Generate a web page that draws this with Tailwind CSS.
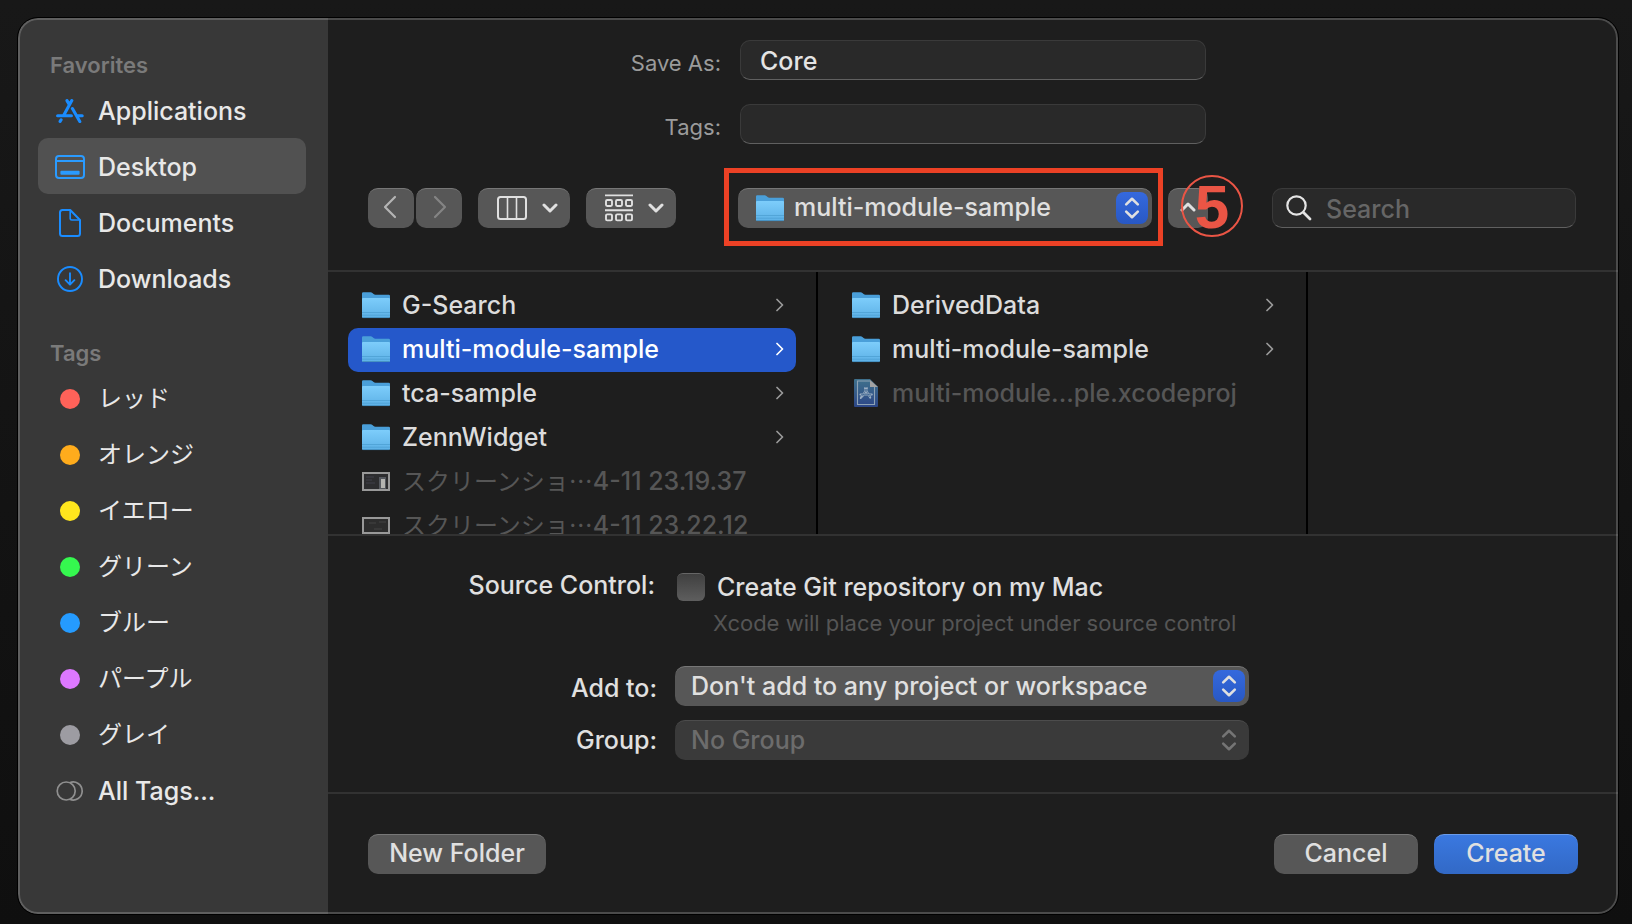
<!DOCTYPE html>
<html lang="en">
<head>
    <meta charset="UTF-8">
    <meta name="viewport" content="width=device-width, initial-scale=1.0">
    <title>Save As</title>
    <script src="https://cdn.jsdelivr.net/npm/@tailwindcss/browser@4"></script>
</head>
<body class="min-h-screen flex pl-[18px] pr-[14px] pt-[18px] pb-[10px] bg-linear-to-b from-[#181818] to-[#0f0f0f] font-['Inter','Noto_Sans_CJK_JP',sans-serif] font-medium text-[25px] leading-8 text-[#e0e0e0]">

    <!-- Shared icons -->
    <svg class="absolute size-0" aria-hidden="true">
        <defs>
            <linearGradient id="folder-front" x1="0" y1="0" x2="0" y2="1">
                <stop offset="0" stop-color="#7dcdfb"/>
                <stop offset="1" stop-color="#5db1e6"/>
            </linearGradient>
            <linearGradient id="project-fill" x1="0" y1="0" x2="0" y2="1">
                <stop offset="0" stop-color="#3f718c"/>
                <stop offset="1" stop-color="#2c4687"/>
            </linearGradient>
        </defs>
        <symbol id="icon-folder" viewBox="0 0 28 27">
            <path d="M0 1.5Q0 .3 1.2 .3H8.6Q9.6 .3 10.4 1L11.6 2.1Q12.3 2.8 13.4 2.8H26.8Q28 2.8 28 4V10H0z" fill="#4a9fd9"/>
            <path d="M0 6.9Q0 6 1 6H27Q28 6 28 6.9V24.8Q28 26 26.8 26H1.2Q0 26 0 24.8z" fill="url(#folder-front)"/>
            <path d="M0 20.5H28M0 23.2H28" stroke="#4c9fd3" stroke-width=".8"/>
            <path d="M.6 25.6H27.4" stroke="#3f86b5" stroke-width=".8"/>
        </symbol>
        <symbol id="icon-more" viewBox="0 0 8 14">
            <path d="M1 1.5L6.5 7L1 12.5" fill="none" stroke="currentColor" stroke-width="1.7" stroke-linecap="round" stroke-linejoin="round"/>
        </symbol>
        <symbol id="icon-down" viewBox="0 0 16 10">
            <path d="M2 2L8 8L14 2" fill="none" stroke="currentColor" stroke-width="3" stroke-linecap="round" stroke-linejoin="round"/>
        </symbol>
        <symbol id="icon-updown" viewBox="0 0 16 24">
            <path d="M2.2 8.4L8 2.8L13.8 8.4M2.2 15.6L8 21.2L13.8 15.6" fill="none" stroke="currentColor" stroke-width="2.6" stroke-linecap="round" stroke-linejoin="round"/>
        </symbol>
    </svg>

    <div class="relative flex-1 flex rounded-[20px] overflow-hidden bg-[#1e1e1e] outline outline-black">

        <!-- Sidebar -->
        <nav class="w-[310px] shrink-0 bg-[#383838] pl-5 pr-[22px] pt-7 text-[#e8e8e8]">
            <h2 class="px-3 pt-0.5 h-9 flex items-center text-[22px] font-semibold text-[#7a7a7a]">Favorites</h2>
            <ul>
                <li><a href="#" class="flex items-center gap-3 h-14 pl-4 pr-3 pt-0.5 rounded-[10px]">
                    <span class="w-8 flex justify-center text-[#1a8cff]">
                        <svg class="w-7 h-6" viewBox="0 0 28 24" fill="none" stroke="currentColor" stroke-width="3.1" stroke-linecap="round">
                            <path d="M15.8 1.6L7.6 16.4M5.1 20.8L4.1 22.4M11 1.6L13.2 5.4M16.4 9.6L23.8 22.6M1.6 16.7H15.4M21.4 16.7H26.2"/>
                        </svg>
                    </span>
                    Applications</a></li>
                <li><a href="#" aria-current="true" class="flex items-center gap-3 h-14 pl-4 pr-3 pt-0.5 rounded-[10px] bg-[#515151]">
                    <span class="w-8 flex justify-center text-[#2a9bff]">
                        <svg class="w-[30px] h-6" viewBox="0 0 30 24" fill="none" stroke="currentColor" stroke-width="2">
                            <rect x="1" y="1" width="28" height="22" rx="3"/>
                            <path d="M1 6H29" stroke-width="1.8"/>
                            <rect x="5.4" y="15.8" width="19.2" height="4" rx="1" fill="currentColor" stroke="none"/>
                        </svg>
                    </span>
                    Desktop</a></li>
                <li><a href="#" class="flex items-center gap-3 h-14 pl-4 pr-3 pt-0.5 rounded-[10px]">
                    <span class="w-8 flex justify-center text-[#1a8cff]">
                        <svg class="w-[22px] h-7" viewBox="0 0 22 28" fill="none" stroke="currentColor" stroke-width="2" stroke-linejoin="round">
                            <path d="M3.5 1H11.2L21 11V24.5Q21 27 18.5 27H3.5Q1 27 1 24.5V3.5Q1 1 3.5 1z"/>
                            <path d="M11.2 1V9.5Q11.2 11 12.7 11H21" stroke-width="1.7"/>
                        </svg>
                    </span>
                    Documents</a></li>
                <li><a href="#" class="flex items-center gap-3 h-14 pl-4 pr-3 pt-0.5 rounded-[10px]">
                    <span class="w-8 flex justify-center text-[#1a8cff]">
                        <svg class="w-[26px] h-[26px]" viewBox="0 0 26 26" fill="none" stroke="currentColor" stroke-width="1.9" stroke-linecap="round" stroke-linejoin="round">
                            <circle cx="13" cy="13" r="12"/>
                            <path d="M13 7.3V18.4M8.6 14.2L13 18.6L17.4 14.2"/>
                        </svg>
                    </span>
                    Downloads</a></li>
            </ul>

            <h2 class="mt-7 px-3 pt-0.5 h-9 flex items-center text-[22px] font-semibold text-[#7a7a7a]">Tags</h2>
            <ul lang="ja" class="text-[24px] font-normal">
                <li><a href="#" class="flex items-center gap-3 h-14 pl-4 pr-3 pt-0.5"><span class="w-8 flex justify-center"><span class="size-5 rounded-full bg-[#ff6259]"></span></span>レッド</a></li>
                <li><a href="#" class="flex items-center gap-3 h-14 pl-4 pr-3 pt-0.5"><span class="w-8 flex justify-center"><span class="size-5 rounded-full bg-[#ffac1c]"></span></span>オレンジ</a></li>
                <li><a href="#" class="flex items-center gap-3 h-14 pl-4 pr-3 pt-0.5"><span class="w-8 flex justify-center"><span class="size-5 rounded-full bg-[#ffe61d]"></span></span>イエロー</a></li>
                <li><a href="#" class="flex items-center gap-3 h-14 pl-4 pr-3 pt-0.5"><span class="w-8 flex justify-center"><span class="size-5 rounded-full bg-[#35f84f]"></span></span>グリーン</a></li>
                <li><a href="#" class="flex items-center gap-3 h-14 pl-4 pr-3 pt-0.5"><span class="w-8 flex justify-center"><span class="size-5 rounded-full bg-[#259bff]"></span></span>ブルー</a></li>
                <li><a href="#" class="flex items-center gap-3 h-14 pl-4 pr-3 pt-0.5"><span class="w-8 flex justify-center"><span class="size-5 rounded-full bg-[#dd78ff]"></span></span>パープル</a></li>
                <li><a href="#" class="flex items-center gap-3 h-14 pl-4 pr-3 pt-0.5"><span class="w-8 flex justify-center"><span class="size-5 rounded-full bg-[#9d9ca2]"></span></span>グレイ</a></li>
                <li lang="en"><a href="#" class="flex items-center gap-3 h-14 pl-4 pr-3 pt-0.5 text-[25px] font-medium">
                    <span class="w-8 flex justify-center text-[#8f8f8f]">
                        <svg class="w-7 h-5" viewBox="0 0 28 20" fill="none" stroke="currentColor" stroke-width="1.7">
                            <circle cx="10.2" cy="10" r="9"/>
                            <path d="M13.7 1.7A9 9 0 1 1 13.7 18.3"/>
                        </svg>
                    </span>
                    All Tags...</a></li>
            </ul>
        </nav>

        <main class="flex-1 min-w-0 flex flex-col">

            <!-- File name, tags and toolbar -->
            <header class="h-[254px] border-b-2 border-[#323232] pt-[22px]">
                <div class="grid grid-cols-[1fr_466px_1fr] gap-x-[19px] gap-y-6 items-center">
                    <label for="save-as" class="text-right text-[22px] font-normal text-[#9b9b9b] pt-1.5">Save As:</label>
                    <input id="save-as" type="text" value="Core" class="h-10 px-[19px] pt-0.5 rounded-[10px] bg-[#292929] border border-[#3a3a3a] border-b-[#606060] text-[#e4e4e4] outline-none">
                    <span></span>
                    <label for="file-tags" class="text-right text-[22px] font-normal text-[#9b9b9b] pt-1.5">Tags:</label>
                    <input id="file-tags" type="text" class="h-10 px-[19px] pt-0.5 rounded-[10px] bg-[#292929] border border-[#3a3a3a] border-b-[#606060] text-[#e4e4e4] outline-none">
                </div>

                <div class="mt-11 pl-10 pr-[42px] flex items-center">
                    <div class="flex gap-0.5">
                        <button aria-label="Back" class="w-[46px] h-10 pb-1 flex items-center justify-center rounded-[10px] bg-[#575757] border-t border-[#777777] text-[#b4b4b4]">
                            <svg class="w-4 h-6" viewBox="0 0 16 24" fill="none" stroke="currentColor" stroke-width="2.2" stroke-linecap="round" stroke-linejoin="round"><path d="M12 2L2 12L12 22"/></svg>
                        </button>
                        <button aria-label="Forward" class="w-[46px] h-10 pb-1 flex items-center justify-center rounded-[10px] bg-[#575757] border-t border-[#777777] text-[#848484]">
                            <svg class="w-4 h-6" viewBox="0 0 16 24" fill="none" stroke="currentColor" stroke-width="2.2" stroke-linecap="round" stroke-linejoin="round"><path d="M4 2L14 12L4 22"/></svg>
                        </button>
                    </div>
                    <button aria-label="Column view" class="ml-4 w-[92px] h-10 pl-[19px] pr-3 pb-0.5 flex items-center justify-between rounded-[10px] bg-[#575757] border-t border-[#777777]">
                        <svg class="w-[30px] h-6" viewBox="0 0 30 24" fill="none" stroke="currentColor" stroke-width="2">
                            <rect x="1" y="1" width="28" height="22" rx="2.5"/>
                            <path d="M10.5 1V23M19.5 1V23" stroke-width="1.6"/>
                        </svg>
                        <svg class="w-4 h-2.5"><use href="#icon-down"/></svg>
                    </button>
                    <button aria-label="Group items" class="ml-4 w-[90px] h-10 pl-[19px] pr-3 pb-0.5 flex items-center justify-between rounded-[10px] bg-[#575757] border-t border-[#777777]">
                        <svg class="w-7 h-7" viewBox="0 0 28 28" fill="none" stroke="currentColor" stroke-width="1.9">
                            <path d="M0 1.4H28M0 16.2H28"/>
                            <rect x="1" y="6" width="6" height="6" rx="1.2"/>
                            <rect x="11" y="6" width="6" height="6" rx="1.2"/>
                            <rect x="21" y="6" width="6" height="6" rx="1.2"/>
                            <rect x="1" y="20.4" width="6" height="6" rx="1.2"/>
                            <rect x="11" y="20.4" width="6" height="6" rx="1.2"/>
                            <rect x="21" y="20.4" width="6" height="6" rx="1.2"/>
                        </svg>
                        <svg class="w-4 h-2.5"><use href="#icon-down"/></svg>
                    </button>

                    <div class="relative ml-[62px] flex-1">
                        <select aria-label="Location" class="block appearance-none w-full h-10 pl-14 pr-12 pb-1 rounded-[10px] bg-[#575757] border-t border-[#777777] outline-none">
                            <option>multi-module-sample</option>
                        </select>
                        <svg class="absolute left-[18px] top-[7px] w-7 h-[27px] pointer-events-none"><use href="#icon-folder"/></svg>
                        <span class="absolute right-1 top-1 size-8 flex items-center justify-center rounded-lg bg-linear-to-b from-[#3569dd] to-[#2858c4] pointer-events-none">
                            <svg class="w-4 h-6"><use href="#icon-updown"/></svg>
                        </span>
                        <!-- step marker frame -->
                        <span class="absolute -left-[14px] -right-[11px] -top-5 -bottom-[18px] border-5 border-[#ec4125] pointer-events-none"></span>
                    </div>
                    <div class="relative ml-4">
                        <button aria-label="Collapse" class="w-10 h-10 pb-1 flex items-center justify-center rounded-[10px] bg-[#575757] border-t border-[#777777]">
                            <svg class="w-4 h-2.5 rotate-180"><use href="#icon-down"/></svg>
                        </button>
                        <span class="absolute left-[13px] -top-[13px] size-[62px] pt-0.5 flex items-center justify-center rounded-full border-2 border-[#ea5545] text-[#ea5545] font-['Liberation_Sans',sans-serif] font-bold text-[62px] leading-none pointer-events-none">5</span>
                    </div>

                    <label class="ml-16 w-[304px] h-10 pl-[13px] pr-3 flex items-center gap-3.5 rounded-[10px] bg-[#292929] border border-[#3a3a3a] border-b-[#606060]">
                        <svg class="w-[26px] h-[26px] shrink-0" viewBox="0 0 26 26" fill="none" stroke="#e4e4e4" stroke-linecap="round">
                            <circle cx="10.5" cy="10.5" r="9.2" stroke-width="2.2"/>
                            <path d="M17.5 17.5L24 24" stroke-width="2.8"/>
                        </svg>
                        <input type="search" aria-label="Search" placeholder="Search" class="flex-1 min-w-0 pt-0.5 bg-transparent outline-none placeholder:text-[#666666]">
                    </label>
                </div>
            </header>

            <!-- Column browser -->
            <section class="grow h-[262px] overflow-hidden flex">
                <ul class="w-[490px] shrink-0 border-r-2 border-black px-5 pt-3 text-[#dcdcdc]">
                    <li><button class="w-full h-11 pl-[14px] pr-3 pb-0.5 flex items-center gap-3 rounded-[10px]">
                        <svg class="w-7 h-[27px]"><use href="#icon-folder"/></svg>G-Search
                        <svg class="ml-auto w-2 h-3.5 text-[#9a9a9a]"><use href="#icon-more"/></svg></button></li>
                    <li><button class="w-full h-11 pl-[14px] pr-3 pb-0.5 flex items-center gap-3 rounded-[10px] bg-[#2558ca] text-white">
                        <svg class="w-7 h-[27px]"><use href="#icon-folder"/></svg>multi-module-sample
                        <svg class="ml-auto w-2 h-3.5"><use href="#icon-more"/></svg></button></li>
                    <li><button class="w-full h-11 pl-[14px] pr-3 pb-0.5 flex items-center gap-3 rounded-[10px]">
                        <svg class="w-7 h-[27px]"><use href="#icon-folder"/></svg>tca-sample
                        <svg class="ml-auto w-2 h-3.5 text-[#9a9a9a]"><use href="#icon-more"/></svg></button></li>
                    <li><button class="w-full h-11 pl-[14px] pr-3 pb-0.5 flex items-center gap-3 rounded-[10px]">
                        <svg class="w-7 h-[27px]"><use href="#icon-folder"/></svg>ZennWidget
                        <svg class="ml-auto w-2 h-3.5 text-[#9a9a9a]"><use href="#icon-more"/></svg></button></li>
                    <li><button disabled lang="ja" class="w-full h-11 pl-[14px] pr-3 pb-0.5 flex items-center gap-3 text-[#565656]">
                        <svg class="w-7 h-[19px]" viewBox="0 0 28 19">
                            <rect width="28" height="19" fill="#999999"/>
                            <rect x="2" y="2" width="24" height="15" fill="#2d2d2f"/>
                            <path d="M4 5H12M4 8H10M4 11H13" stroke="#41414a"/>
                            <rect x="17" y="5" width="7" height="12" fill="#55585e"/>
                            <rect x="19" y="7" width="4" height="9" fill="#b4b4b0"/>
                        </svg><span><span class="text-[24px] font-normal">スクリーンショ⋯</span>4-11 23.19.37</span></button></li>
                    <li><button disabled lang="ja" class="w-full h-11 pl-[14px] pr-3 pb-0.5 flex items-center gap-3 text-[#565656]">
                        <svg class="w-7 h-[17px]" viewBox="0 0 28 17">
                            <rect width="28" height="17" fill="#999999"/>
                            <rect x="2" y="2" width="24" height="13" fill="#2d2d2d"/>
                            <path d="M7 6H14M17 5H24M12 12H20" stroke="#444444"/>
                        </svg><span><span class="text-[24px] font-normal">スクリーンショ⋯</span>4-11 23.22.12</span></button></li>
                </ul>
                <ul class="w-[490px] shrink-0 border-r-2 border-black px-5 pt-3 text-[#dcdcdc]">
                    <li><button class="w-full h-11 pl-[14px] pr-3 pb-0.5 flex items-center gap-3 rounded-[10px]">
                        <svg class="w-7 h-[27px]"><use href="#icon-folder"/></svg>DerivedData
                        <svg class="ml-auto w-2 h-3.5 text-[#9a9a9a]"><use href="#icon-more"/></svg></button></li>
                    <li><button class="w-full h-11 pl-[14px] pr-3 pb-0.5 flex items-center gap-3 rounded-[10px]">
                        <svg class="w-7 h-[27px]"><use href="#icon-folder"/></svg>multi-module-sample
                        <svg class="ml-auto w-2 h-3.5 text-[#9a9a9a]"><use href="#icon-more"/></svg></button></li>
                    <li><button disabled class="w-full h-11 pl-[14px] pr-3 pb-0.5 flex items-center gap-3 text-[#565656]">
                        <svg class="w-7 h-7" viewBox="0 0 28 28" fill="none">
                            <path d="M3 0H18L26 8V27Q26 28 25 28H3Q2 28 2 27V1Q2 0 3 0z" fill="url(#project-fill)"/>
                            <path d="M18 2H5.5V25.5H22.5V8" stroke="#8fa3b5" stroke-width="1.1"/>
                            <path d="M18 1V8H26z" fill="#a3a3a3"/>
                            <path d="M14.9 9.2L10.3 17.4M13 9.2L18.2 18.6M8.4 15.6H19.8M9.2 18L8.8 19" stroke="#9db0c4" stroke-width="2" stroke-linecap="round"/>
                            <path d="M14.6 10L10.4 17.2M13.4 10L17.8 18M9 15.6H19.2" stroke="#39618f" stroke-width=".7"/>
                        </svg>multi-module...ple.xcodeproj</button></li>
                </ul>
            </section>

            <!-- Source control and project options -->
            <section class="border-t-2 border-[#323232] h-[258px] pt-[31px]">
                <div class="grid grid-cols-[329px_minmax(0,574px)] gap-x-[18px] items-center">
                    <span class="text-right pr-0.5">Source Control:</span>
                    <label class="flex items-center gap-3 pl-0.5 pt-1">
                        <input type="checkbox" class="appearance-none size-7 rounded-md bg-linear-to-b from-[#404040] to-[#5e5e5e] border-t border-[#666666]">
                        Create Git repository on my Mac
                    </label>
                    <p class="col-start-2 mt-1 pl-[38px] text-[22px] font-normal text-[#555555]">Xcode will place your project under source control</p>

                    <label for="add-to" class="mt-[27px] text-right pt-1">Add to:</label>
                    <div class="relative mt-[27px]">
                        <select id="add-to" class="block appearance-none w-full h-10 pl-4 pr-12 pb-0.5 rounded-[10px] bg-[#575757] border-t border-[#777777] outline-none">
                            <option>Don't add to any project or workspace</option>
                        </select>
                        <span class="absolute right-1 top-1 size-8 flex items-center justify-center rounded-lg bg-linear-to-b from-[#3569dd] to-[#2858c4] pointer-events-none">
                            <svg class="w-4 h-6"><use href="#icon-updown"/></svg>
                        </span>
                    </div>

                    <label for="group" class="mt-3.5 text-right">Group:</label>
                    <div class="relative mt-3.5">
                        <select id="group" disabled class="block appearance-none w-full h-10 pl-4 pr-12 pb-0.5 rounded-[10px] bg-[#3a3a3a] border-t border-[#4c4c4c] text-[#6c6c6c] opacity-100 outline-none">
                            <option>No Group</option>
                        </select>
                        <span class="absolute right-1 top-1 size-8 flex items-center justify-center text-[#757575] pointer-events-none">
                            <svg class="w-4 h-6"><use href="#icon-updown"/></svg>
                        </span>
                    </div>
                </div>
            </section>

            <footer class="border-t-2 border-[#323232] h-[122px] pl-10 pr-10 pt-10 flex items-start gap-4">
                <button class="w-[178px] h-10 pb-1 rounded-[10px] bg-[#575757] border-t border-[#777777]">New Folder</button>
                <button class="ml-auto w-36 h-10 pb-1 rounded-[10px] bg-[#575757] border-t border-[#777777]">Cancel</button>
                <button class="w-36 h-10 pb-1 rounded-[10px] bg-linear-to-b from-[#3a78e0] to-[#3269c6] border-t border-[#6a9bea]">Create</button>
            </footer>
        </main>

        <!-- window edge, drawn above both panes -->
        <div class="absolute inset-0 rounded-[20px] border-2 border-white/20 pointer-events-none"></div>
    </div>
</body>
</html>
